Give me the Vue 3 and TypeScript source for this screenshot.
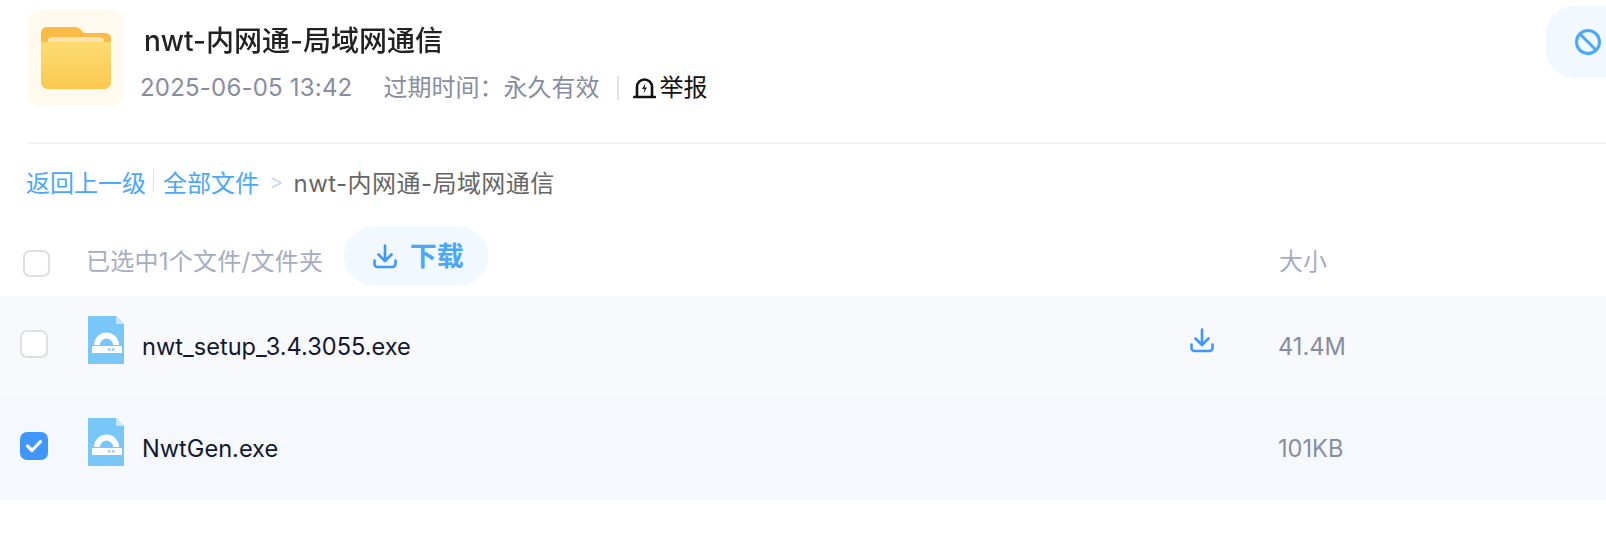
<template>
	<div class="page">
		<header class="share-head">
			<div class="folder-tile">
				<svg width="70" height="62" viewBox="0 0 70 62">
					<defs>
						<linearGradient id="front" x1="0" y1="0" x2="0" y2="1">
							<stop offset="0" stop-color="#fddc72" />
							<stop offset="1" stop-color="#fac84f" />
						</linearGradient>
					</defs>
					<path d="M6 0h28c3 0 4 1 6 3l3 3h21c3.500 0 6 2.500 6 6v20H0V6c0-3.500 2.500-6 6-6z" fill="#fbbb47" />
					<path d="M7 14c0-2.500 1.500-4 4-4h48c2.500 0 4 1.500 4 4v4H7z" fill="#fde3ab" />
					<path d="M0 15h70v40c0 4-3 7-7 7H7c-4 0-7-3-7-7z" fill="url(#front)" />
				</svg>
			</div>
			<div class="head-text">
				<h1 class="title">nwt-内网通-局域网通信</h1>
				<div class="meta">
					<span class="date">2025-06-05 13:42</span>
					<span class="expire">过期时间：永久有效</span>
					<i class="meta-sep"></i>
					<span class="report">
						<svg width="23" height="22" viewBox="0 0 23 22">
							<path d="M4 19V10a7.500 7.500 0 0 1 15 0v9" fill="none" stroke="#111" stroke-width="2.600" />
							<path d="M1 20h21" stroke="#111" stroke-width="2.400" stroke-linecap="round" />
							<path d="M12.500 6 9 12h2.500l-1 4.500 3.500-6h-2.500z" fill="#111" />
						</svg>
						举报
					</span>
				</div>
			</div>
			<div class="block-btn">
				<svg width="26" height="26" viewBox="0 0 26 26">
					<circle cx="13" cy="13" r="11.500" fill="none" stroke="#4aa8fb" stroke-width="3" />
					<path d="M5 5l16 16" stroke="#4aa8fb" stroke-width="3" />
				</svg>
			</div>
		</header>

		<nav class="crumbs">
			<a>返回上一级</a>
			<i class="crumb-sep"></i>
			<a>全部文件</a>
			<span class="crumb-arrow">&gt;</span>
			<span class="crumb-now">nwt-内网通-局域网通信</span>
		</nav>

		<div class="list-head">
			<span class="check head-check"></span>
			<span class="selected">已选中1个文件/文件夹</span>
			<button class="down-btn">
				<svg class="down-icon" viewBox="0 0 24 25">
					<path d="M12 1.500v15M5.500 10.500l6.500 6.500 6.500-6.500M1.500 16.500v3.500a3 3 0 0 0 3 3h15a3 3 0 0 0 3-3v-3.500" fill="none" stroke="currentColor" stroke-width="2.600" stroke-linecap="round" stroke-linejoin="round" />
				</svg>
				<span class="down-label">下载</span>
			</button>
			<span class="size-head">大小</span>
		</div>

		<div class="rows">
			<div
				v-for="file in files"
				:key="file.name"
				class="row"
				:class="{ picked: file.checked }"
			>
				<span class="check row-check" :class="{ on: file.checked }">
					<svg v-if="file.checked" width="18" height="14" viewBox="0 0 18 14">
						<path d="M2.500 7l4.500 4.500 8.500-9" fill="none" stroke="#fff" stroke-width="3.200" stroke-linecap="round" stroke-linejoin="round" />
					</svg>
				</span>
				<svg class="file-icon" width="36" height="48" viewBox="0 0 36 48">
					<path d="M0 0h28l8 8v40H0z" fill="#79c6f9" />
					<path d="M28 0l8 8h-8z" fill="#c5e6fc" />
					<path d="M6 29a12.500 12.500 0 0 1 25 0h-6a6.500 6.500 0 0 0-13 0z" fill="#fff" />
					<rect x="4" y="30" width="30" height="7" rx="1" fill="#fff" />
					<rect x="20" y="32.500" width="2.500" height="2" fill="#79c6f9" />
					<rect x="24" y="32.500" width="2.500" height="2" fill="#79c6f9" />
				</svg>
				<span class="file-name">{{ file.name }}</span>
				<span class="row-action">
					<svg v-if="!file.checked" class="down-icon" viewBox="0 0 24 25">
						<path d="M12 1.500v15M5.500 10.500l6.500 6.500 6.500-6.500M1.500 16.500v3.500a3 3 0 0 0 3 3h15a3 3 0 0 0 3-3v-3.500" fill="none" stroke="currentColor" stroke-width="2.600" stroke-linecap="round" stroke-linejoin="round" />
					</svg>
				</span>
				<span class="file-size">{{ file.size }}</span>
			</div>
		</div>
	</div>
</template>

<script setup lang="ts">
import { ref } from "vue";

interface ShareFile {
	name: string;
	size: string;
	checked: boolean;
}

const files = ref<ShareFile[]>([
	{ name: "nwt_setup_3.4.3055.exe", size: "41.4M", checked: false },
	{ name: "NwtGen.exe", size: "101KB", checked: true },
]);
</script>

<style>
html,
body {
	margin: 0;
	background: #fff;
}
</style>

<style scoped>
.page {
	width: 1606px;
	height: 536px;
	overflow: hidden;
	font-family: Inter, "Noto Sans CJK SC", sans-serif;
	font-size: 24px;
}

.share-head {
	display: flex;
	height: 144px;
	margin-left: 28px;
	padding-top: 6px;
	box-sizing: border-box;
	border-bottom: 2px solid #f3f4f6;
}

.folder-tile {
	width: 96px;
	height: 96px;
	margin-top: 4px;
	border-radius: 12px;
	background: #fff9ee;
	display: flex;
	align-items: center;
	justify-content: center;
	flex-shrink: 0;
}

.head-text {
	margin-left: 16px;
	flex: 1;
}

.title {
	margin: 15px 0 0;
	padding-left: 4px;
	font-size: 28px;
	line-height: 40px;
	font-weight: 500;
	color: #222;
	filter: blur(0.5px);
}

.meta {
	display: flex;
	align-items: center;
	height: 36px;
	margin-top: 9px;
	color: #878d9f;
	line-height: 36px;
}

.date {
	letter-spacing: 0.2px;
}

.expire {
	margin-left: 31px;
}

.meta-sep {
	width: 2px;
	height: 24px;
	margin: 0 14px 0 18px;
	background: #dfe2e8;
}

.report {
	display: flex;
	align-items: center;
	gap: 3px;
	color: #111;
}

.block-btn {
	width: 120px;
	height: 72px;
	margin-right: -60px;
	border-radius: 28px;
	background: #f1f8ff;
	display: flex;
	align-items: center;
	padding-left: 29px;
	box-sizing: border-box;
	flex-shrink: 0;
}

.crumbs {
	display: flex;
	align-items: center;
	height: 36px;
	margin: 19px 0 0 26px;
	color: #4aa8fb;
}

.crumb-sep {
	width: 1px;
	height: 24px;
	margin: 0 9px 0 7px;
	background: #cfe6fb;
}

.crumb-arrow {
	margin: 0 10px;
	color: #c9d9f3;
	font-size: 22px;
}

.crumb-now {
	color: #666;
	letter-spacing: 0.45px;
}

.list-head {
	display: flex;
	align-items: center;
	height: 60px;
	margin-top: 27px;
	padding-left: 23px;
	color: #a6adc0;
}

.check {
	width: 28px;
	height: 28px;
	box-sizing: border-box;
	border: 2px solid #dfdfe1;
	border-radius: 7px;
	background: #fff;
	display: flex;
	align-items: center;
	justify-content: center;
	flex-shrink: 0;
}

.check.on {
	border: 0;
	background: #3f97fb;
}

.head-check {
	width: 27px;
	height: 27px;
	margin-top: 14px;
}

.row-check {
	margin-top: -6px;
}

.selected {
	margin: 6px 21px 0 36px;
	letter-spacing: 0.25px;
}

.down-btn {
	width: 144px;
	height: 60px;
	padding: 0 0 0 4px;
	border: 0;
	border-radius: 30px;
	background: #f1f8ff;
	color: #4aa8fb;
	font: inherit;
	font-size: 27px;
	font-weight: 700;
	display: flex;
	align-items: center;
	justify-content: center;
	gap: 13px;
}

.down-label {
	margin-top: -4px;
}

.down-icon {
	width: 24px;
	height: 25px;
	color: #3f97fb;
}

.size-head {
	margin: 6px 0 0 auto;
	width: 327px;
}

.rows {
	margin-top: 10px;
}

.row {
	display: flex;
	align-items: center;
	height: 102px;
	padding-left: 20px;
	background: #f7f9fd;
	color: #14172f;
}

.row.picked {
	background: #f5f9fe;
}

.file-icon {
	margin: -14px 0 0 40px;
	flex-shrink: 0;
}

.file-name {
	margin: -2px 0 0 18px;
	width: 1048px;
	font-size: 23.6px;
}

.row-action {
	width: 88px;
	display: flex;
	margin-top: -14px;
}

.file-size {
	margin-top: -2px;
	color: #878d9f;
	font-size: 23.6px;
}
</style>
